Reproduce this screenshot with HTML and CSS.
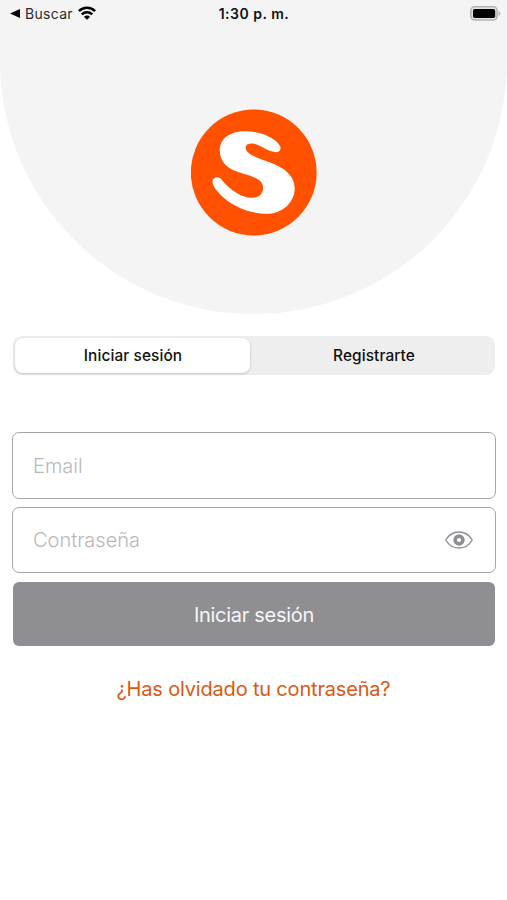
FILE: index.html
```html
<!DOCTYPE html>
<html lang="es">
<head>
<meta charset="utf-8">
<meta name="viewport" content="width=device-width, initial-scale=1">
<title>Iniciar sesión</title>
<link rel="stylesheet" href="styles.css">
</head>
<body>
<header class="hero">
  <div class="status">
    <div class="status-left">
      <svg class="back" viewBox="0 0 10 9"><path d="M0 4.5 10 0v9z"/></svg>
      <span class="back-label">Buscar</span>
      <svg class="wifi" viewBox="0 0 18 14"><g fill="none" stroke="#000" stroke-width="2.5"><path d="M.9 5.1a11.5 11.5 0 0 1 16.2 0"/><path d="M3.8 8.4a7.4 7.4 0 0 1 10.4 0"/></g><path d="M9 13.8 5.9 10.8a4.4 4.4 0 0 1 6.2 0z"/></svg>
    </div>
    <span class="time">1:30 p. m.</span>
    <svg class="battery" viewBox="0 0 31 15"><rect x=".8" y=".8" width="26.4" height="13.2" rx="4" fill="#e4e4e4" stroke="#b4b4b4" stroke-width="1.6"/><rect x="3" y="3" width="22.2" height="9" rx="1.8"/><path d="M28.6 5.2c2.4.8 2.4 3.8 0 4.6z" fill="#b4b4b4"/></svg>
  </div>
  <svg class="logo" viewBox="32 27 380 380"><circle cx="222" cy="217" r="189" fill="#ff5100"/><path fill="#fff" d="M302 140C294 118 250 93 197 93C150 93 120 115 120 150C120 185 143 206 180 217C220 229 250 237 250 263C250 282 238 293 217 293C180 293 143 260 127 240C118 226 98 230 98 245C98 270 165 341 262 341C310 341 345 305 345 265C345 225 310 200 265 185C225 171 198 160 198 143C198 132 208 130 218 130C240 132 265 156 290 156C300 156 304 149 302 140Z"/></svg>
</header>
<main class="content">
  <nav class="tabs">
    <button class="tab active">Iniciar sesión</button>
    <button class="tab">Registrarte</button>
  </nav>
  <form class="form">
    <div class="field email"><span class="hint">Email</span></div>
    <div class="field password"><span class="hint">Contraseña</span>
      <svg class="eye" viewBox="0 0 28 18"><path d="M.8 9C7 -1.7 21 -1.7 27.2 9 21 19.7 7 19.7.8 9z" fill="none" stroke="#8e8e93" stroke-width="1.4"/><circle cx="14" cy="9" r="3.9" fill="none" stroke="#8e8e93" stroke-width="3.6"/></svg>
    </div>
    <button class="submit" type="button"><span>Iniciar sesión</span></button>
  </form>
  <a class="forgot">¿Has olvidado tu contraseña?</a>
</main>
</body>
</html>
```
FILE: styles.css
```css
* { box-sizing: border-box; }
body {
  margin: 0;
  background: #fff;
  color: #111;
  font-family: Inter, "Liberation Sans", sans-serif;
}
button { border: 0; font: inherit; color: inherit; }
.hero {
  height: 314px;
  background: #f4f4f4;
  border-radius: 0 0 253px 253px;
}
.status {
  display: grid;
  grid-template-columns: 1fr auto 1fr;
  align-items: center;
  height: 27px;
  padding: 0 6px 0 10px;
}
.status-left { display: flex; align-items: center; }
.back { width: 10px; height: 9px; }
.back-label { margin-left: 5px; font-size: 14px; letter-spacing: 0.3px; color: #2b2b2b; }
.wifi { width: 18px; height: 14px; margin-left: 5px; margin-top: -2px; }
.time { margin-right: 3px; font-size: 14px; font-weight: 600; letter-spacing: 0.5px; }
.battery { width: 31px; height: 15px; justify-self: end; margin-top: -1px; }
.logo { display: block; width: 127px; height: 127px; margin: 82px auto 0; padding-left: 0.5px; }
.content { padding: 22px 12px 0; }
.tabs {
  display: grid;
  grid-template-columns: 1fr 1fr;
  height: 39px;
  margin: 0 0 0 1px;
  padding: 2px;
  border-radius: 9px;
  background: #eee;
}
.tab {
  padding: 0 0 0 1px;
  border-radius: 8px;
  background: none;
  font-size: 15.4px;
  font-weight: 500;
  letter-spacing: 0.1px;
}
.active { margin-right: 4px; background: #fff; box-shadow: 0 1px 3px rgba(0, 0, 0, 0.18); }
.form { display: flex; flex-direction: column; margin-top: 57px; }
.field {
  display: flex;
  align-items: center;
  justify-content: space-between;
  height: 67px;
  margin-right: -1px;
  padding: 0 22px 0 20px;
  border: 1.5px solid #a6a6a6;
  border-radius: 7px;
}
.password { height: 66px; margin-top: 8px; }
.hint { font-size: 20px; font-weight: 300; color: #b8b8ba; }
.eye { width: 28px; height: 18px; }
.submit {
  height: 64px;
  margin: 9px 0 0 1px;
  padding: 2px 0 0;
  border-radius: 6px;
  background: #8e8e93;
  color: #f7f7f7;
  font-size: 20px;
  letter-spacing: -0.28px;
}
.forgot { display: block; margin-top: 31px; text-align: center; font-size: 20px; line-height: 25px; letter-spacing: -0.18px; color: #dc5812; }
```
